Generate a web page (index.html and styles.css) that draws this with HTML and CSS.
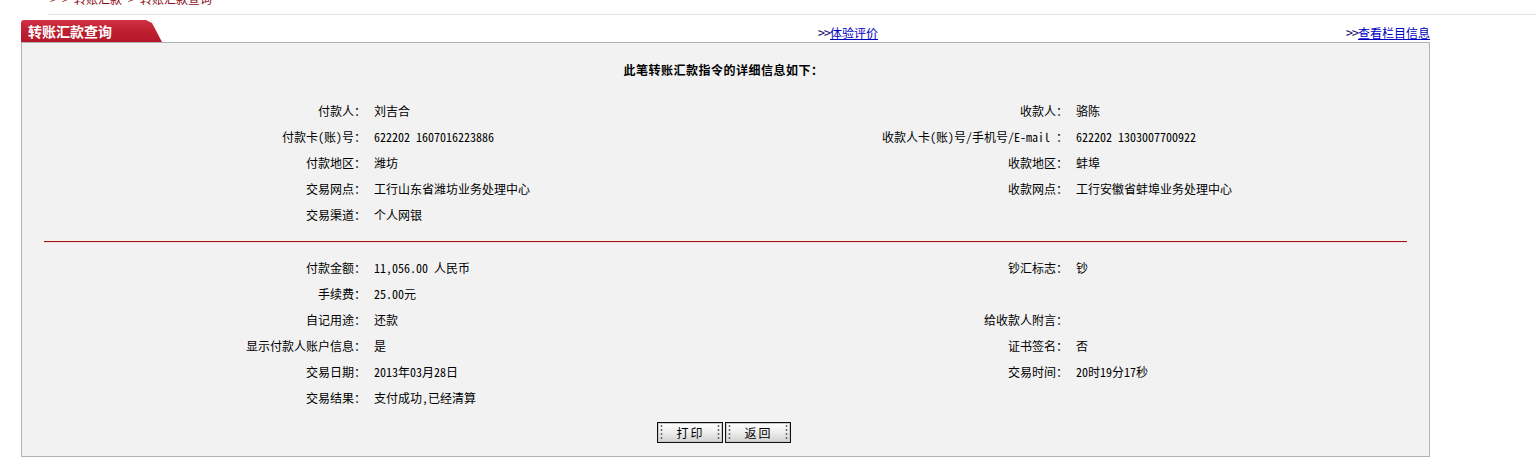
FILE: index.html
```html
<!DOCTYPE html>
<html lang="zh-CN">
<head>
<meta charset="utf-8">
<title>转账汇款查询</title>
<link rel="stylesheet" href="styles.css">
</head>
<body>
<div class="crumbs">&gt; &gt; 转账汇款 &gt; 转账汇款查询</div>
<div class="header">
  <div class="tab">转账汇款查询</div>
  <div class="link-mid"><span class="arr">&gt;&gt;</span><a href="#">体验评价</a></div>
  <div class="link-right"><span class="arr">&gt;&gt;</span><a href="#">查看栏目信息</a></div>
</div>
<div class="panel">
  <div class="title">此笔转账汇款指令的详细信息如下：</div>
  <div class="info">
    <div class="lbl">付款人：</div><div class="val">刘吉合</div>
    <div class="lbl">收款人：</div><div class="val">骆陈</div>
    <div class="lbl">付款卡(账)号：</div><div class="val">622202 1607016223886</div>
    <div class="lbl">收款人卡(账)号/手机号/E-mail ：</div><div class="val">622202 1303007700922</div>
    <div class="lbl">付款地区：</div><div class="val">潍坊</div>
    <div class="lbl">收款地区：</div><div class="val">蚌埠</div>
    <div class="lbl">交易网点：</div><div class="val">工行山东省潍坊业务处理中心</div>
    <div class="lbl">收款网点：</div><div class="val">工行安徽省蚌埠业务处理中心</div>
    <div class="lbl">交易渠道：</div><div class="val">个人网银</div>
    <div class="lbl"></div><div class="val"></div>
  </div>
  <div class="divider"></div>
  <div class="info">
    <div class="lbl">付款金额：</div><div class="val">11,056.00 人民币</div>
    <div class="lbl">钞汇标志：</div><div class="val">钞</div>
    <div class="lbl">手续费：</div><div class="val">25.00元</div>
    <div class="lbl"></div><div class="val"></div>
    <div class="lbl">自记用途：</div><div class="val">还款</div>
    <div class="lbl">给收款人附言：</div><div class="val"></div>
    <div class="lbl">显示付款人账户信息：</div><div class="val">是</div>
    <div class="lbl">证书签名：</div><div class="val">否</div>
    <div class="lbl">交易日期：</div><div class="val">2013年03月28日</div>
    <div class="lbl">交易时间：</div><div class="val">20时19分17秒</div>
    <div class="lbl">交易结果：</div><div class="val">支付成功,已经清算</div>
    <div class="lbl"></div><div class="val"></div>
  </div>
  <div class="buttons">
    <button class="btn" type="button">打印</button>
    <button class="btn" type="button">返回</button>
  </div>
</div>
</body>
</html>
```

FILE: styles.css
```css
html, body {
  margin: 0;
  padding: 0;
  background: #ffffff;
}
body {
  font-family: "Noto Sans Mono CJK SC", "Noto Sans CJK SC", sans-serif;
  font-size: 12px;
  color: #000;
  overflow: hidden;
}
.crumbs {
  margin: -8px 0 0 48px;
  height: 23px;
  line-height: 14px;
  padding-left: 2px;
  color: #8e1020;
  border-bottom: 1px solid #e4e4e4;
  box-sizing: border-box;
}
.header {
  margin: 5px 0 0 21px;
  width: 1409px;
  height: 22px;
  display: grid;
  grid-template-columns: 797px 1fr auto;
  align-items: center;
}
.tab {
  width: 141px;
  height: 22px;
  box-sizing: border-box;
  padding-left: 7px;
  line-height: 22px;
  font-size: 14px;
  font-weight: bold;
  color: #fff;
  background: linear-gradient(#d03246 0%, #c0202f 45%, #b3182a 100%);
  border-radius: 3px 16px 0 0;
  clip-path: polygon(0 0, 125px 0, 131px 3px, 141px 22px, 0 22px);
}
.link-mid, .link-right {
  padding-top: 2px;
  line-height: 16px;
  white-space: nowrap;
}
.arr {
  color: #14146e;
  font-size: 14px;
  letter-spacing: -1px;
}
.header a {
  color: #0000c0;
  text-decoration: underline;
}
.panel {
  margin-left: 21px;
  width: 1409px;
  box-sizing: border-box;
  background: #f2f2f2;
  border: 1px solid #b2b2b2;
  padding: 19px 22px 13px;
}
.title {
  text-align: center;
  font-weight: bold;
  line-height: 16px;
  letter-spacing: 0.5px;
  margin-left: -4px;
}
.info {
  margin-top: 20px;
  display: grid;
  grid-template-columns: 322px 380px 322px 339px;
}
.info + .buttons {
  margin-top: 11px;
}
.divider + .info {
  margin-top: 13px;
}
.lbl, .val {
  height: 26px;
  line-height: 26px;
  white-space: nowrap;
}
.lbl {
  text-align: right;
}
.val {
  padding-left: 8px;
}
.divider {
  margin-top: 13px;
  border-top: 1px solid #a51212;
  box-shadow: 0 1px 0 #f5dada;
}
.buttons {
  display: flex;
  justify-content: center;
  gap: 2px;
  margin-left: -4px;
}
.btn {
  width: 66px;
  height: 21px;
  padding: 0;
  margin: 0;
  border: 1px solid #111;
  font-family: inherit;
  font-size: 12px;
  letter-spacing: 2px;
  text-indent: 2px;
  color: #000;
  line-height: 19px;
  background:
    radial-gradient(circle, #6a6a6a 0.9px, transparent 1.2px) 2px 1px / 3px 4px repeat-y,
    radial-gradient(circle, #6a6a6a 0.9px, transparent 1.2px) right 2px top 1px / 3px 4px repeat-y,
    linear-gradient(#ffffff 0%, #f4f4f4 35%, #d2d2d2 100%);
  box-shadow: inset 0 0 0 1px #c8c8c8;
}
```
